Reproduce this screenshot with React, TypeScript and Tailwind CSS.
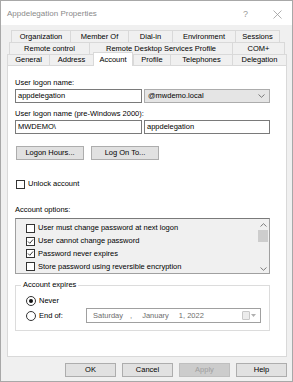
import React from "react";

type TabDef = { label: string; w: number; selected?: boolean };

const row1: TabDef[] = [
  { label: "Organization", w: 59 },
  { label: "Member Of", w: 58 },
  { label: "Dial-in", w: 44 },
  { label: "Environment", w: 63 },
  { label: "Sessions", w: 45 },
];
const row2: TabDef[] = [
  { label: "Remote control", w: 80 },
  { label: "Remote Desktop Services Profile", w: 143 },
  { label: "COM+", w: 53 },
];
const row3: TabDef[] = [
  { label: "General", w: 42 },
  { label: "Address", w: 44 },
  { label: "Account", w: 40, selected: true },
  { label: "Profile", w: 37 },
  { label: "Telephones", w: 62 },
  { label: "Delegation", w: 55 },
];

const options = [
  { label: "User must change password at next logon", checked: false },
  { label: "User cannot change password", checked: true },
  { label: "Password never expires", checked: true },
  { label: "Store password using reversible encryption", checked: false },
];

const CheckBox: React.FC<{ checked?: boolean }> = ({ checked }) => (
  <span className="w-[9px] h-[9px] border border-[#333333] bg-white flex items-center justify-center shrink-0">
    {checked && (
      <svg width="7" height="7" viewBox="0 0 7 7">
        <polyline points="1,3.5 2.8,5.3 6,1.5" fill="none" stroke="#222" strokeWidth="0.9" />
      </svg>
    )}
  </span>
);

const Radio: React.FC<{ checked?: boolean }> = ({ checked }) => (
  <span className="w-[10px] h-[10px] rounded-full border border-[#333333] bg-white flex items-center justify-center shrink-0">
    {checked && <span className="w-[4px] h-[4px] rounded-full bg-[#111]" />}
  </span>
);

const TabRow: React.FC<{ tabs: TabDef[]; className: string }> = ({ tabs, className }) => (
  <div className={`flex ${className}`}>
    {tabs.map((t, i) => (
      <div
        key={t.label}
        style={{ width: t.w }}
        className={`flex items-center justify-center border-t border-l border-[#d9d9d9] ${
          i === tabs.length - 1 ? "border-r" : ""
        } ${
          t.selected
            ? "bg-white h-[14px] -mt-[2px] -mb-px relative z-10 border-r"
            : "bg-[#f0f0f0] h-full"
        }`}
      >
        {t.label}
      </div>
    ))}
  </div>
);

const SysButton: React.FC<{ label: string; disabled?: boolean }> = ({ label, disabled }) => (
  <div
    className={`w-[51px] h-[14px] flex items-center justify-center border ${
      disabled ? "bg-[#cccccc] border-[#bfbfbf] text-[#a0a0a0]" : "bg-[#e1e1e1] border-[#adadad] text-black"
    }`}
  >
    {label}
  </div>
);

export default function App() {
  return (
    <div className="w-[293px] h-[382px] bg-[#f0f0f0] border border-[#a8a8a8] flex flex-col font-['Liberation_Sans',Arial,sans-serif] text-[7.5px] leading-[10px] text-black overflow-hidden">
      {/* Title bar */}
      <div className="h-[24px] bg-white flex items-center pl-[6px] pr-[10px] pt-[2px] shrink-0">
        <span className="text-[8px] text-[#8a8a8a] flex-1">Appdelegation Properties</span>
        <span className="text-[9px] text-[#9a9a9a] mr-[25px]">?</span>
        <svg width="9" height="9" viewBox="0 0 9 9">
          <path d="M0.5 0.5 L8.5 8.5 M8.5 0.5 L0.5 8.5" stroke="#9a9a9a" strokeWidth="0.8" />
        </svg>
      </div>

      {/* Body */}
      <div className="flex flex-col pt-[5px] pl-[6px] pr-[5px]">
        <TabRow tabs={row1} className="h-[12px] ml-[4px]" />
        <TabRow tabs={row2} className="h-[12px] ml-[2px]" />
        <TabRow tabs={row3} className="h-[11px]" />

        {/* Panel */}
        <div className="h-[292px] bg-white border border-[#d9d9d9] pt-[12px] pl-[7px] pr-[16px] flex flex-col">
          <div>User logon name:</div>
          <div className="flex gap-[2px] mt-[1px]">
            <div className="w-[127px] h-[14px] border border-[#7a7a7a] flex items-center px-[2px]">appdelegation</div>
            <div className="flex-1 h-[14px] border border-[#acacac] bg-[#e5e5e5] flex items-center pl-[3px] pr-[4px]">
              <span className="flex-1">@mwdemo.local</span>
              <svg width="7" height="4" viewBox="0 0 7 4">
                <polyline points="0.5,0.5 3.5,3.3 6.5,0.5" fill="none" stroke="#606060" strokeWidth="0.8" />
              </svg>
            </div>
          </div>

          <div className="mt-[6px]">User logon name (pre-Windows 2000):</div>
          <div className="flex gap-[2px] mt-[1px]">
            <div className="w-[127px] h-[14px] border border-[#7a7a7a] flex items-center px-[2px]">MWDEMO\</div>
            <div className="flex-1 h-[14px] border border-[#7a7a7a] flex items-center px-[2px]">appdelegation</div>
          </div>

          <div className="flex gap-[7px] mt-[12px] pl-px">
            <div className="w-[68px] h-[14px] bg-[#e1e1e1] border border-[#adadad] flex items-center justify-center">Logon Hours...</div>
            <div className="w-[68px] h-[14px] bg-[#e1e1e1] border border-[#adadad] flex items-center justify-center">Log On To...</div>
          </div>

          <div className="flex items-center gap-[3px] mt-[19px] pl-px">
            <CheckBox />
            <span>Unlock account</span>
          </div>

          <div className="mt-[16px]">Account options:</div>
          <div className="mt-[3px] h-[56px] border border-[#a0a0a0] border-t-[#7a7a7a] bg-[#f0f0f0] flex">
            <div className="flex-1 flex flex-col pl-[10px] pt-[3px]">
              {options.map((o) => (
                <div key={o.label} className="flex items-center gap-[3px] h-[13px]">
                  <CheckBox checked={o.checked} />
                  <span>{o.label}</span>
                </div>
              ))}
            </div>
            <div className="w-[12px] flex flex-col items-center pt-[4px] pb-[2px]">
              <svg width="7" height="4" viewBox="0 0 7 4">
                <polyline points="0.5,3.5 3.5,0.7 6.5,3.5" fill="none" stroke="#606060" strokeWidth="0.8" />
              </svg>
              <div className="w-[10px] h-[12px] bg-[#cdcdcd] mt-[3px]" />
              <div className="flex-1" />
              <svg width="7" height="4" viewBox="0 0 7 4">
                <polyline points="0.5,0.5 3.5,3.3 6.5,0.5" fill="none" stroke="#606060" strokeWidth="0.8" />
              </svg>
            </div>
          </div>

          <fieldset className="mt-[6px] border border-[#dcdcdc] pt-[5px] pb-[7px]">
            <legend className="ml-[5px] px-[2px]">Account expires</legend>
            <div className="pl-[10px] pr-[8px]">
              <div className="flex items-center gap-[3px] h-[12px]">
                <Radio checked />
                <span>Never</span>
              </div>
              <div className="flex items-center h-[15px] mt-[1px]">
                <div className="flex items-center gap-[3px] w-[60px]">
                  <Radio />
                  <span>End of:</span>
                </div>
                <div className="flex-1 h-[15px] border border-[#a0a0a0] flex items-center pl-[6px] pr-[4px] text-[#6d6d6d]">
                  <span>Saturday</span>
                  <span className="ml-[7px]">,</span>
                  <span className="ml-[10px]">January</span>
                  <span className="ml-[10px]">1, 2022</span>
                  <span className="flex-1" />
                  <span className="w-[8px] h-[9px] border border-[#c8c8c8] bg-[#ececec] rounded-[1px]" />
                  <svg width="5" height="3" viewBox="0 0 5 3" className="ml-[1px]">
                    <polygon points="0,0 5,0 2.5,3" fill="#b0b0b0" />
                  </svg>
                </div>
              </div>
            </div>
          </fieldset>
        </div>

        {/* Dialog buttons */}
        <div className="flex justify-end gap-[6px] mt-[6px]">
          <SysButton label="OK" />
          <SysButton label="Cancel" />
          <SysButton label="Apply" disabled />
          <SysButton label="Help" />
        </div>
      </div>
    </div>
  );
}
